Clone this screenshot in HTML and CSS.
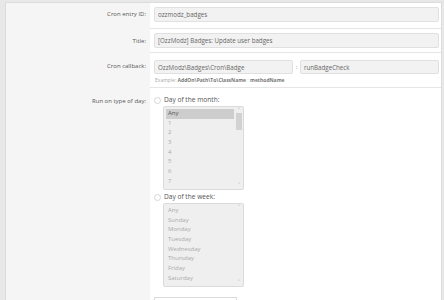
FILE: index.html
```html
<!DOCTYPE html>
<html lang="en">
<head>
    <meta charset="UTF-8">
    <title>Cron entry</title>
    <link rel="stylesheet" href="styles.css">
</head>
<body>
    <div class="form">
        <div class="row row-id">
            <div class="label">Cron entry ID:</div>
            <div class="field">
                <input class="input" type="text" value="ozzmodz_badges">
            </div>
        </div>
        <div class="row row-title">
            <div class="label">Title:</div>
            <div class="field">
                <input class="input" type="text" value="[OzzModz] Badges: Update user badges">
            </div>
        </div>
        <div class="row row-callback">
            <div class="label">Cron callback:</div>
            <div class="field">
                <div class="callback">
                    <input class="input" type="text" value="OzzModz\Badges\Cron\Badge">
                    <span class="sep">:</span>
                    <input class="input" type="text" value="runBadgeCheck">
                </div>
                <p class="explain">Example: <b>AddOn\Path\To\ClassName</b> : <b>methodName</b></p>
            </div>
        </div>
        <div class="row row-days">
            <div class="label">Run on type of day:</div>
            <div class="field">
                <div class="radio"><span class="dot"></span>Day of the month:</div>
                <div class="listbox">
                    <ul class="items">
                        <li class="selected">Any</li>
                        <li>1</li>
                        <li>2</li>
                        <li>3</li>
                        <li>4</li>
                        <li>5</li>
                        <li>6</li>
                        <li>7</li>
                    </ul>
                    <div class="scroll">
                        <span class="arrow">&#708;</span>
                        <span class="thumb"></span>
                        <span class="arrow down">&#709;</span>
                    </div>
                </div>
                <div class="radio"><span class="dot"></span>Day of the week:</div>
                <div class="listbox">
                    <ul class="items">
                        <li>Any</li>
                        <li>Sunday</li>
                        <li>Monday</li>
                        <li>Tuesday</li>
                        <li>Wednesday</li>
                        <li>Thursday</li>
                        <li>Friday</li>
                        <li>Saturday</li>
                    </ul>
                    <div class="scroll">
                        <span class="arrow">&#708;</span>
                        <span class="arrow down">&#709;</span>
                    </div>
                </div>
                <div class="next-box"></div>
            </div>
        </div>
    </div>
</body>
</html>
```

FILE: styles.css
```css
body {
    margin: 0;
    background-color: #e8e8e8;
    font-family: "Open Sans", "Noto Sans", sans-serif;
    font-size: 6px;
    color: #555;
}

.form {
    margin: 2px 2px 0 5px;
    background-color: #fff;
    border: 1px solid #dcdcdc;
    border-bottom: none;
    height: 297px;
    overflow: hidden;
}

.row {
    display: grid;
    grid-template-columns: 144px 1fr;
}

.label {
    background-color: #f5f5f5;
    text-align: right;
    padding-right: 4px;
    color: #555;
    line-height: 8px;
}

.field {
    padding: 4px 2px 6px 4px;
    border-bottom: 1px solid #e6e6e6;
}

.row-id .label { padding-top: 7px; }

.row-title .field { padding-bottom: 4px; }
.row-title .label { padding-top: 8px; }

.row-callback .field { padding: 7px 2px 4px 4px; }
.row-callback .label { padding-top: 9px; }

.row-days .field {
    padding: 8px 2px 0 4px;
    border-bottom: none;
}
.row-days .label { padding-top: 9px; }

.input {
    display: block;
    box-sizing: border-box;
    width: 100%;
    height: 15px;
    margin: 0;
    padding: 0 3px;
    border: 1px solid #e0e0e0;
    border-radius: 2px;
    background-color: #f2f2f2;
    font-family: inherit;
    font-size: 6.2px;
    color: #666;
}

.callback {
    display: flex;
    align-items: center;
}

.callback .input {
    height: 14px;
    flex: 0 0 139px;
}

.callback .input + .sep + .input {
    flex: 1;
}

.sep {
    width: 7px;
    text-align: center;
    color: #888;
}

.explain {
    margin: 3px 0 0 1px;
    font-size: 5px;
    line-height: 6px;
    color: #aaa;
}

.explain b {
    color: #777;
}

.radio {
    display: flex;
    align-items: center;
    gap: 3px;
    line-height: 8px;
    font-size: 6.6px;
    color: #555;
}

.dot {
    width: 5px;
    height: 5px;
    border: 1px solid #d6d6d6;
    border-radius: 50%;
    background-color: #fff;
}

.listbox {
    display: flex;
    width: 81px;
    height: 84px;
    box-sizing: border-box;
    margin: 2px 0 3px 9px;
    border: 1px solid #dadada;
    border-radius: 2px;
    background-color: #efefef;
}

.items {
    flex: 1;
    list-style: none;
    margin: 0;
    padding: 2px 1px 0 2px;
    color: #aaa;
}

.items li {
    height: 9.7px;
    line-height: 9.7px;
    padding-left: 2px;
}

.items li.selected {
    background-color: #cdcdcd;
    color: #555;
}

.scroll {
    width: 8px;
    display: flex;
    flex-direction: column;
    align-items: center;
    padding-top: 1px;
    color: #888;
}

.arrow {
    font-size: 5px;
    line-height: 4px;
}

.arrow.down {
    margin-top: auto;
    margin-bottom: 2px;
}

.thumb {
    width: 6px;
    height: 17px;
    background-color: #d2d2d2;
    margin-top: 1px;
}

.next-box {
    width: 81px;
    height: 20px;
    margin-top: 10px;
    border: 1px solid #dadada;
    background-color: #fff;
}
```
